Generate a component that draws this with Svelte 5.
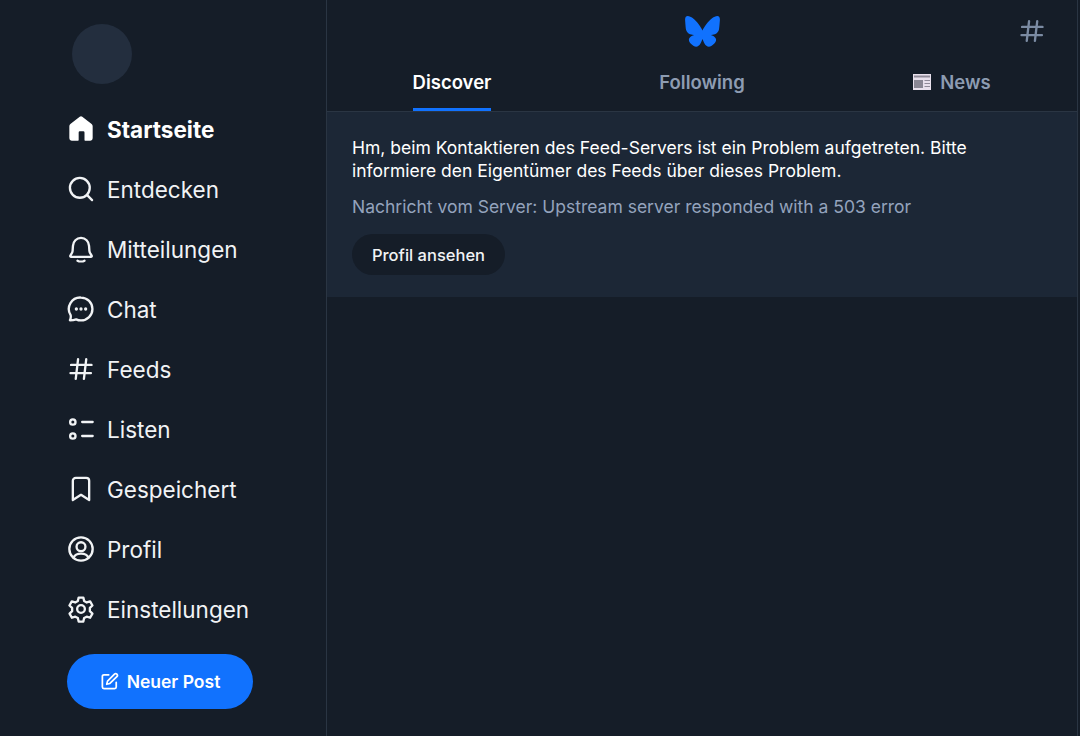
<script>
  const items = [
    { label: 'Startseite', key: 'home', active: true },
    { label: 'Entdecken', key: 'search' },
    { label: 'Mitteilungen', key: 'bell' },
    { label: 'Chat', key: 'chat' },
    { label: 'Feeds', key: 'hash' },
    { label: 'Listen', key: 'list' },
    { label: 'Gespeichert', key: 'bookmark' },
    { label: 'Profil', key: 'profile' },
    { label: 'Einstellungen', key: 'gear' }
  ];
</script>

{#snippet hash()}
  <path d="M9.5 3.5 7.5 20.5M16.5 3.5l-2 17M3.5 8.5h17.5M3 15.5h17.5" />
{/snippet}

<div class="shell">
  <nav class="side">
    <div class="avatar"></div>
    <ul class="menu">
      {#each items as item}
        <li class="item" class:active={item.active}>
          <svg class="ico" viewBox="0 0 24 24" fill="none" stroke="currentColor" stroke-width="2" stroke-linecap="round" stroke-linejoin="round">
            {#if item.key === 'home'}
              <path fill="currentColor" stroke="none" d="M10.9 1.5a1.8 1.8 0 0 1 2.2 0l8 6.2c.6.5.9 1.1.9 1.9V20a2 2 0 0 1-2 2h-4.5a.5.5 0 0 1-.5-.5V15a1 1 0 0 0-1-1h-3a1 1 0 0 0-1 1v6.500a.5.5 0 0 1-.5.5H4a2 2 0 0 1-2-2V9.600c0-.8.3-1.400.9-1.900z" />
            {:else if item.key === 'search'}
              <circle cx="11" cy="11" r="8.500" /><path d="m17.300 17.300 4.200 4.200" />
            {:else if item.key === 'bell'}
              <path d="M12 2.500c-3.900 0-6.700 3-6.900 6.800l-.3 4.300c-.1.900-.4 1.700-.9 2.400l-1 1.600c-.3.500 0 1.100.6 1.100h17c.6 0 .9-.6.6-1.100l-1-1.600a5 5 0 0 1-.9-2.400l-.3-4.300C18.700 5.500 15.900 2.500 12 2.500z" /><path d="M9 22c1.500.9 4.500.9 6 0" />
            {:else if item.key === 'chat'}
              <path d="M12 2.200a9.800 9.800 0 0 1 0 19.600c-1.500 0-2.900-.3-4.100-.9-1.800.6-3.500.8-5.400.8.600-1.300 1-2.900.6-4.500A9.800 9.800 0 0 1 12 2.200z" />
              <circle cx="8" cy="12" r=".9" fill="currentColor" stroke-width="1" /><circle cx="12" cy="12" r=".9" fill="currentColor" stroke-width="1" /><circle cx="16" cy="12" r=".9" fill="currentColor" stroke-width="1" />
            {:else if item.key === 'hash'}
              {@render hash()}
            {:else if item.key === 'list'}
              <circle cx="5" cy="6" r="2.300" /><circle cx="5" cy="18" r="2.300" /><path d="M13 6h9M13 18h9" />
            {:else if item.key === 'bookmark'}
              <path d="M5 5a2.500 2.500 0 0 1 2.500-2.500h9A2.500 2.500 0 0 1 19 5v16.500l-7-4.500-7 4.500z" />
            {:else if item.key === 'profile'}
              <circle cx="12" cy="12" r="10" /><circle cx="12" cy="10" r="3.800" /><path d="M5.500 19.500c1-2.300 3.500-3.500 6.500-3.500s5.500 1.200 6.500 3.500" />
            {:else}
              <path d="M10 2.200h4l.7 3 2.200 1.200 2.900-.9 2 3.500-2.200 2.100v2.800l2.200 2.100-2 3.500-2.900-.9-2.200 1.200-.7 3h-4l-.7-3-2.200-1.200-2.900.9-2-3.500 2.200-2.100v-2.800L2.100 9l2-3.500 2.900.9 2.300-1.200z" /><circle cx="12" cy="12" r="3.300" />
            {/if}
          </svg>
          <span>{item.label}</span>
        </li>
      {/each}
    </ul>
    <button class="compose">
      <svg viewBox="0 0 24 24" fill="none" stroke="currentColor" stroke-width="2.200" stroke-linecap="round" stroke-linejoin="round">
        <path d="M11 3.500H5a2 2 0 0 0-2 2V19a2 2 0 0 0 2 2h13.500a2 2 0 0 0 2-2v-6" /><path d="M18.300 2.800a2.100 2.100 0 0 1 3 3L12.500 14.500 8.500 15.500l1-4z" />
      </svg>
      <span>Neuer Post</span>
    </button>
  </nav>

  <main class="feed">
    <header class="head">
      <div class="brand">
        <svg class="logo" viewBox="0 0 64 57"><path fill="#1172fe" d="M13.873 3.805C21.21 9.332 29.103 20.537 32 26.55v15.882c0-.338-.13.044-.41.867-1.512 4.456-7.418 21.847-20.923 7.944-7.111-7.32-3.819-14.64 9.125-16.85-7.405 1.264-15.73-.825-18.014-9.015C1.12 23.022 0 8.51 0 6.55 0-3.268 8.579-.182 13.873 3.805ZM50.127 3.805C42.79 9.332 34.897 20.537 32 26.55v15.882c0-.338.13.044.41.867 1.512 4.456 7.418 21.847 20.923 7.944 7.111-7.32 3.819-14.64-9.125-16.85 7.405 1.264 15.73-.825 18.014-9.015C62.88 23.022 64 8.51 64 6.55c0-9.818-8.578-6.732-13.873-2.745Z" /></svg>
        <svg class="feeds" viewBox="0 0 24 24" fill="none" stroke="currentColor" stroke-width="2" stroke-linecap="round">{@render hash()}</svg>
      </div>
      <div class="tabs">
        <div class="tab on"><span class="lab">Discover</span></div>
        <div class="tab"><span class="lab">Following</span></div>
        <div class="tab">
          <span class="lab">
            <svg class="news" viewBox="0 0 18 16"><rect width="18" height="16" y="0" fill="#e8e0ec" /><rect x="1" y="1.500" width="16" height="2" fill="#8f8a98" /><rect x="1" y="6" width="9" height="8" fill="#8a8794" /><path d="M11.500 6.500H17M11.500 9.500H17M11.500 12.500H17" stroke="#8f8a98" stroke-width="1" /></svg>
            News
          </span>
        </div>
      </div>
    </header>
    <section class="error">
      <p class="msg">Hm, beim Kontaktieren des Feed-Servers ist ein Problem aufgetreten. Bitte informiere den Eigentümer des Feeds über dieses Problem.</p>
      <p class="sub">Nachricht vom Server: Upstream server responded with a 503 error</p>
      <button class="view">Profil ansehen</button>
    </section>
  </main>
</div>

<style>
  :global(body) {
    margin: 0;
    background: #151d28;
    font-family: Inter, "Liberation Sans", sans-serif;
  }
  .shell {
    display: flex;
    width: 1080px;
    height: 736px;
    overflow: hidden;
    background: #151d28;
  }
  .side {
    width: 326px;
    flex: none;
    box-sizing: border-box;
    padding: 24px 0 0 67px;
    border-right: 0;
  }
  .avatar {
    width: 60px;
    height: 60px;
    margin-left: 5px;
    border-radius: 50%;
    background: #232e3e;
  }
  .menu {
    list-style: none;
    margin: 15px 0 0;
    padding: 0;
  }
  .item {
    height: 60px;
    display: flex;
    align-items: center;
    gap: 12px;
    color: #f1f3f5;
    font-size: 22.5px;
    letter-spacing: 0;
  }
  .item.active {
    font-weight: 700;
    color: #fff;
  }
  .ico {
    width: 28px;
    height: 28px;
    flex: none;
  }
  .compose {
    display: flex;
    align-items: center;
    justify-content: center;
    gap: 8px;
    width: 186px;
    height: 55px;
    margin-top: 15px;
    border: 0;
    border-radius: 28px;
    background: #1172fe;
    color: #fff;
    font: 600 17.500px Inter, sans-serif;
  }
  .compose svg {
    width: 19px;
    height: 19px;
  }
  .feed {
    width: 752px;
    flex: none;
    box-sizing: border-box;
    height: 736px;
    border-left: 1px solid #2a3543;
    border-right: 1px solid #2a3543;
  }
  .head {
    border-bottom: 1px solid #2a3543;
  }
  .brand {
    height: 64px;
    position: relative;
  }
  .logo {
    position: absolute;
    left: 358px;
    top: 16px;
    width: 35px;
    height: 31px;
  }
  .feeds {
    position: absolute;
    right: 31px;
    top: 17px;
    width: 28px;
    height: 28px;
    color: #7b8ba3;
  }
  .tabs {
    display: flex;
    height: 47px;
  }
  .tab {
    flex: 1;
    display: flex;
    justify-content: center;
    color: #8d9cb2;
    font-size: 18.500px;
    font-weight: 600;
  }
  .lab {
    display: flex;
    align-items: center;
    gap: 9px;
    height: 44px;
    padding-bottom: 8px;
    box-sizing: border-box;
  }
  .tab.on {
    color: #fff;
  }
  .tab.on .lab {
    height: 47px;
    border-bottom: 3px solid #1172fe;
    padding-bottom: 9px;
  }
  .news {
    width: 18px;
    height: 16px;
  }
  .error {
    background: #1c2736;
    padding: 24px 25px 21px;
    height: 185px;
    box-sizing: border-box;
  }
  .msg {
    margin: 0;
    color: #fff;
    font-size: 17.500px;
    line-height: 23px;
  }
  .sub {
    margin: 13px 0 0;
    color: #94a3bd;
    font-size: 17.500px;
    line-height: 23px;
  }
  .view {
    display: block;
    margin-top: 16px;
    height: 41px;
    width: 153px;
    border: 0;
    border-radius: 21px;
    background: #151d28;
    color: #f1f3f5;
    font: 500 16.500px Inter, sans-serif;
  }
</style>
